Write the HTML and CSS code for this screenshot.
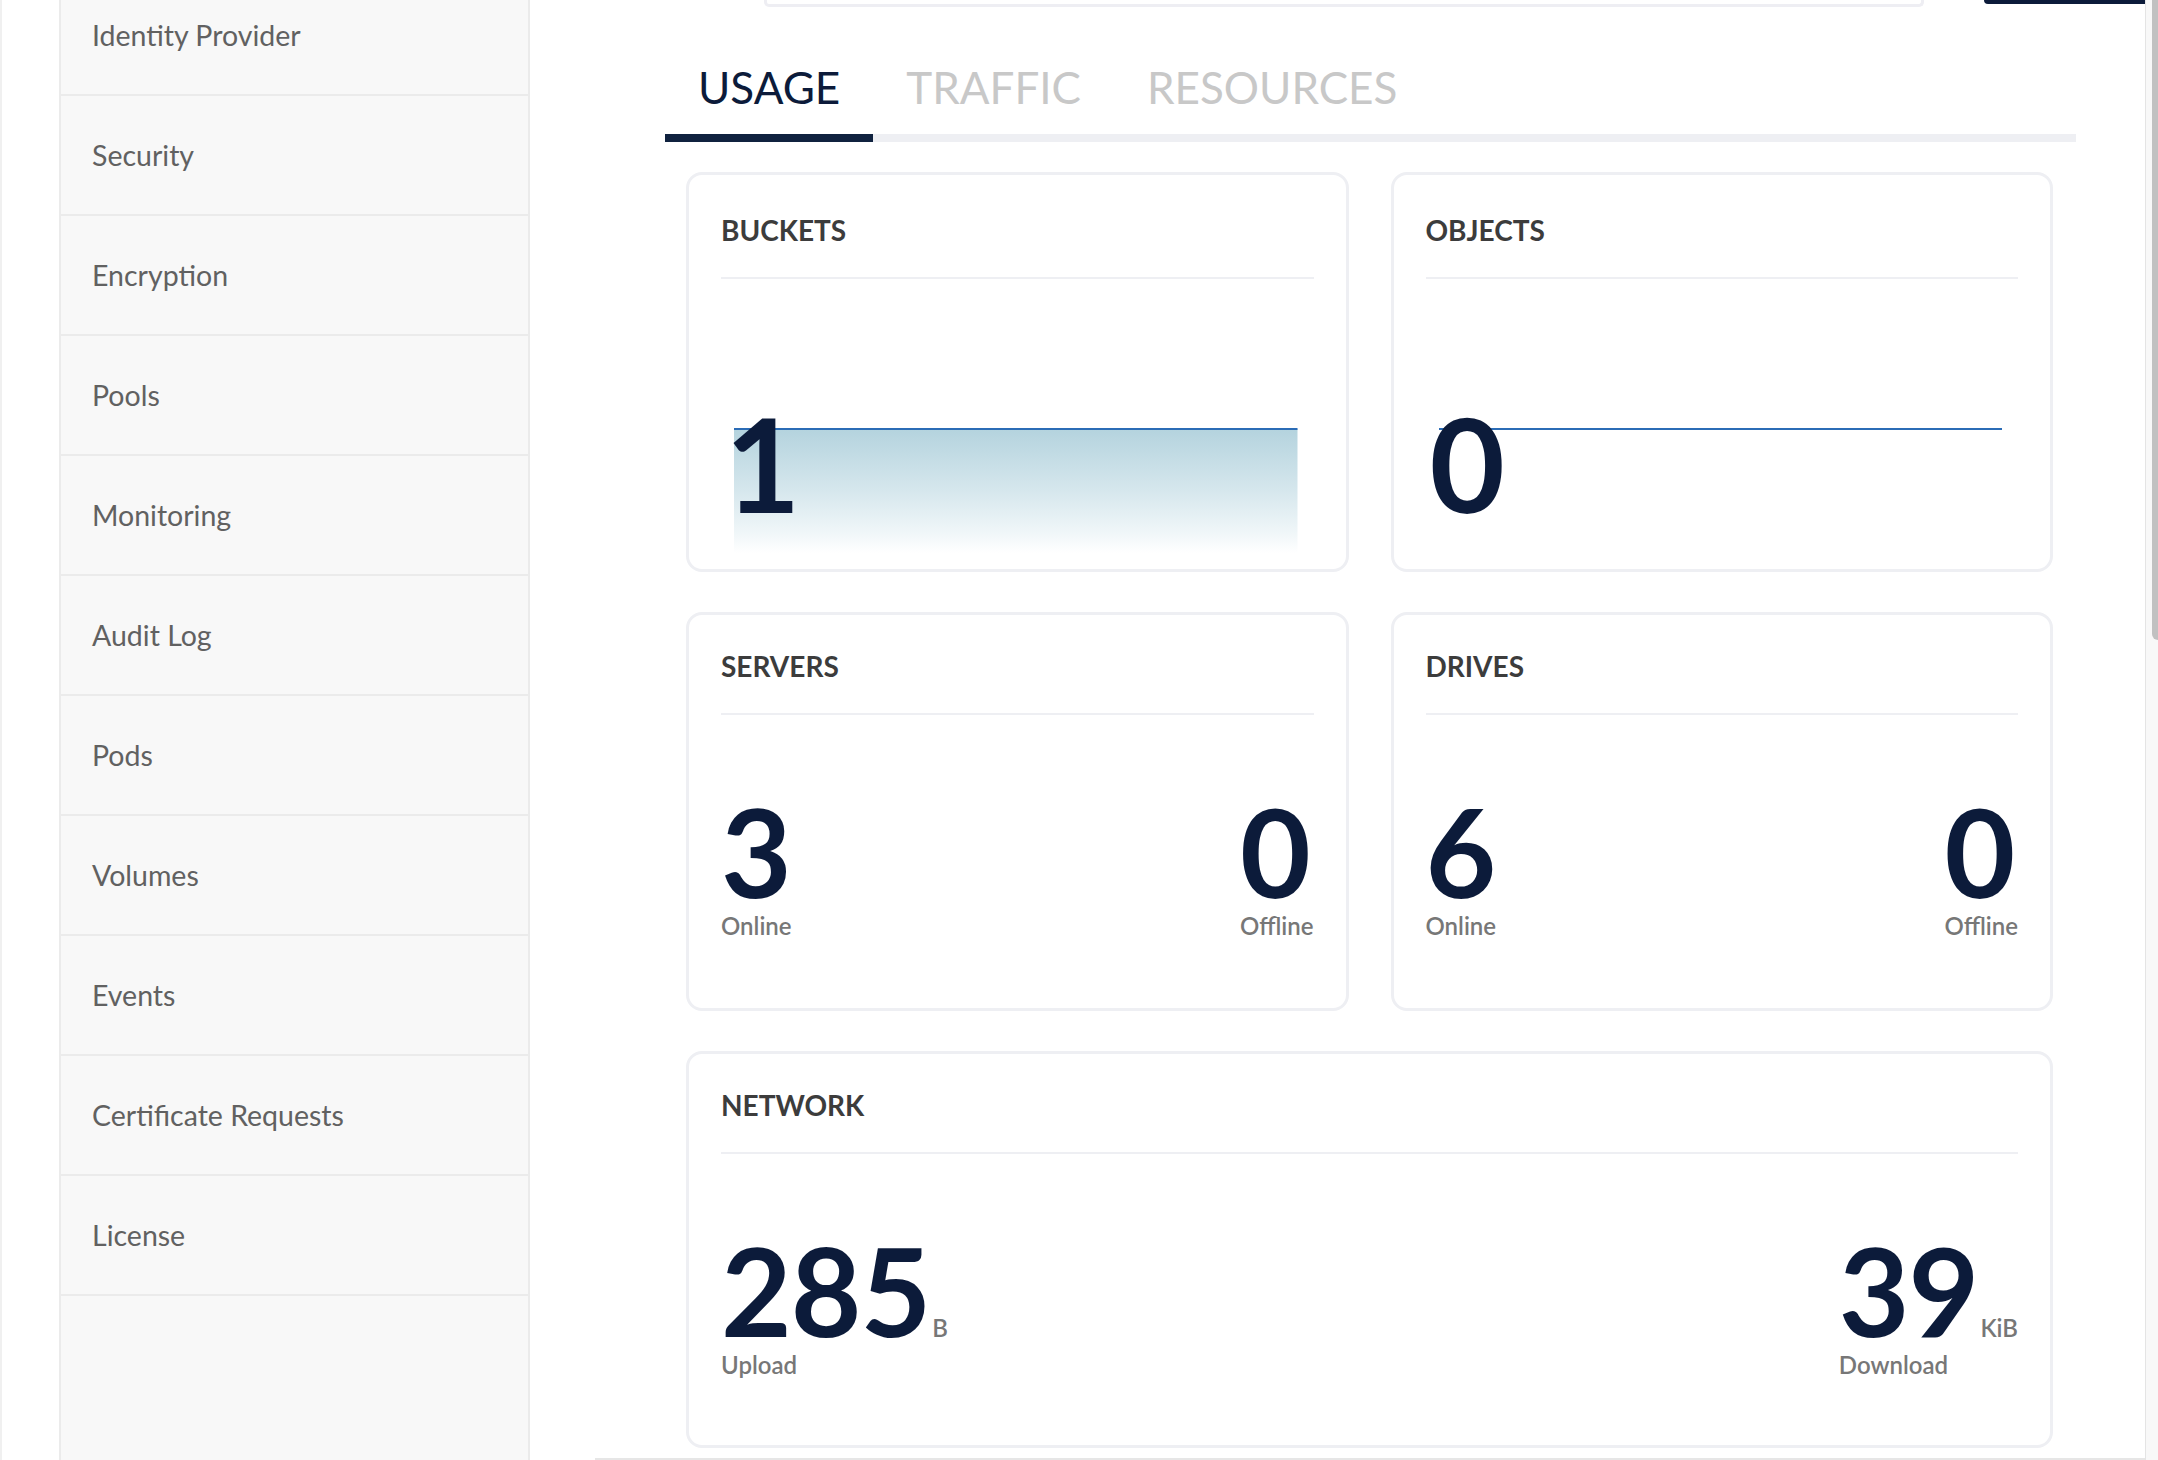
FILE: index.html
```html
<!DOCTYPE html>
<html lang="en">
<head>
<meta charset="utf-8">
<title>Dashboard</title>
<link rel="stylesheet" href="styles.css">
</head>
<body>
<div class="app">
  <div class="gutter"></div>
  <nav class="sidebar">
    <div class="menu-item">Identity Provider</div>
    <div class="menu-item">Security</div>
    <div class="menu-item">Encryption</div>
    <div class="menu-item">Pools</div>
    <div class="menu-item">Monitoring</div>
    <div class="menu-item">Audit Log</div>
    <div class="menu-item">Pods</div>
    <div class="menu-item">Volumes</div>
    <div class="menu-item">Events</div>
    <div class="menu-item">Certificate Requests</div>
    <div class="menu-item">License</div>
  </nav>
  <main class="main">
    <div class="topbar">
      <div class="search"></div>
      <div class="topbtn"></div>
    </div>
    <div class="tabs">
      <div class="tab active">USAGE</div>
      <div class="tab">TRAFFIC</div>
      <div class="tab">RESOURCES</div>
      <div class="tab-fill"></div>
    </div>
    <div class="grid">
      <section class="card chart-card">
        <h3 class="card-title">BUCKETS</h3>
        <div class="chart-body">
          <svg class="chart" viewBox="0 0 100 126" preserveAspectRatio="none">
            <defs>
              <linearGradient id="fillGrad" x1="0" y1="0" x2="0" y2="1">
                <stop offset="0" stop-color="#b4d3de"/>
                <stop offset="0.5" stop-color="#d6e7ed"/>
                <stop offset="0.85" stop-color="#f1f7f9"/>
                <stop offset="1" stop-color="#ffffff"/>
              </linearGradient>
            </defs>
            <rect x="0" y="1" width="100" height="124" fill="url(#fillGrad)"/>
            <line x1="0" y1="1" x2="100" y2="1" stroke="#2b6cb6" stroke-width="2" vector-effect="non-scaling-stroke"/>
          </svg>
          <div class="big-num">1</div>
        </div>
      </section>
      <section class="card chart-card">
        <h3 class="card-title">OBJECTS</h3>
        <div class="chart-body">
          <svg class="chart" viewBox="0 0 100 126" preserveAspectRatio="none">
            <line x1="0" y1="1" x2="100" y2="1" stroke="#2b6cb6" stroke-width="2" vector-effect="non-scaling-stroke"/>
          </svg>
          <div class="big-num">0</div>
        </div>
      </section>
      <section class="card">
        <h3 class="card-title">SERVERS</h3>
        <div class="stats">
          <div class="stat">
            <div class="num-row"><span class="num">3</span></div>
            <div class="label">Online</div>
          </div>
          <div class="stat">
            <div class="num-row"><span class="num">0</span></div>
            <div class="label">Offline</div>
          </div>
        </div>
      </section>
      <section class="card">
        <h3 class="card-title">DRIVES</h3>
        <div class="stats">
          <div class="stat">
            <div class="num-row"><span class="num">6</span></div>
            <div class="label">Online</div>
          </div>
          <div class="stat">
            <div class="num-row"><span class="num">0</span></div>
            <div class="label">Offline</div>
          </div>
        </div>
      </section>
      <section class="card wide">
        <h3 class="card-title">NETWORK</h3>
        <div class="stats">
          <div class="stat">
            <div class="num-row"><span class="num">285</span><span class="unit">B</span></div>
            <div class="label">Upload</div>
          </div>
          <div class="stat">
            <div class="num-row"><span class="num">39</span><span class="unit">KiB</span></div>
            <div class="label">Download</div>
          </div>
        </div>
      </section>
    </div>
    <div class="hline"></div>
  </main>
  <div class="scrollbar"><div class="thumb"></div></div>
</div>
</body>
</html>
```
FILE: styles.css
```css
html, body {
  margin: 0;
  padding: 0;
  width: 2158px;
  height: 1460px;
  overflow: hidden;
  background: #ffffff;
  font-family: Lato, "Noto Sans", "Liberation Sans", sans-serif;
}

.app {
  display: flex;
  height: 1460px;
}

.gutter {
  width: 59px;
  flex-shrink: 0;
  box-sizing: border-box;
  border-left: 2px solid #f0f0f0;
}

.sidebar {
  width: 471px;
  flex-shrink: 0;
  box-sizing: border-box;
  background: #f8f8f8;
  border-left: 2px solid #ebebeb;
  border-right: 2px solid #ebebeb;
  overflow: hidden;
}

.menu-item {
  height: 120px;
  box-sizing: border-box;
  border-bottom: 2px solid #ebebeb;
  display: flex;
  align-items: center;
  padding-left: 31px;
  font-size: 28.5px;
  color: #616161;
}

.menu-item:first-child {
  margin-top: -24px;
}

.main {
  flex: 1;
  min-width: 0;
  display: flex;
  flex-direction: column;
  overflow: hidden;
}

.topbar {
  display: flex;
  align-items: flex-start;
  height: 7px;
}

.search {
  margin-left: 234px;
  width: 1160px;
  height: 7px;
  box-sizing: border-box;
  border: 3px solid #eeeef3;
  border-top: 0;
  border-radius: 0 0 5px 5px;
}

.topbtn {
  margin-left: auto;
  width: 161px;
  height: 4px;
  background: #0c1b3a;
  border-bottom-left-radius: 6px;
}

.tabs {
  display: flex;
  margin: 33px 0 0 135px;
  width: 1411px;
}

.tab {
  padding: 20px 33px;
  font-size: 44px;
  line-height: 54px;
  color: #c8c8c8;
  border-bottom: 8px solid #eeeff3;
}

.tab.active {
  color: #0c1b3a;
  border-bottom-color: #10223f;
}

.tab-fill {
  flex: 1;
  border-bottom: 8px solid #eeeff3;
}

.grid {
  margin: 30px 0 0 156px;
  width: 1367px;
  display: grid;
  grid-template-columns: 1fr 1fr;
  grid-template-rows: 400px 399px 397px;
  column-gap: 42px;
  row-gap: 40px;
}

.card {
  box-sizing: border-box;
  border: 3px solid #eeeff3;
  border-radius: 16px;
  padding: 0 32px;
  background: #ffffff;
}

.card.wide {
  grid-column: 1 / -1;
}

.card-title {
  margin: 0;
  padding: 34px 0 30px;
  font-size: 28px;
  line-height: 34px;
  font-weight: 700;
  color: #3c3c3c;
  border-bottom: 2px solid #eeeff3;
}

.chart-card .card-title {
  padding-top: 38px;
}

.chart-body {
  position: relative;
  padding-top: 119px;
}

.chart {
  position: absolute;
  left: 13px;
  top: 149px;
  height: 126px;
  width: calc(100% - 29px);
}

.big-num {
  position: relative;
  z-index: 1;
  padding-left: 4px;
  font-size: 130px;
  line-height: 130px;
  font-weight: 700;
  color: #0c1b3a;
}

.stats {
  display: flex;
  justify-content: space-between;
  padding-top: 75px;
}

.stat {
  display: flex;
  flex-direction: column;
  align-items: flex-start;
}

.num-row {
  display: flex;
  align-items: baseline;
}

.num {
  font-size: 122px;
  line-height: 122px;
  font-weight: 700;
  letter-spacing: -1px;
  color: #0c1b3a;
}

.unit {
  margin-left: 2px;
  font-size: 24px;
  font-weight: 600;
  color: #777777;
}

.label {
  font-size: 24px;
  line-height: 28px;
  font-weight: 600;
  color: #777777;
}

.hline {
  margin: 10px 0 0 65px;
  border-top: 2px solid #e6e6e6;
}

.scrollbar {
  width: 13px;
  flex-shrink: 0;
  box-sizing: border-box;
  border-left: 1px solid #e4e4e4;
  background: #f8f8f8;
}

.thumb {
  margin-left: 6px;
  height: 640px;
  background: #c1c1c1;
  border-bottom-left-radius: 6px;
}
```
